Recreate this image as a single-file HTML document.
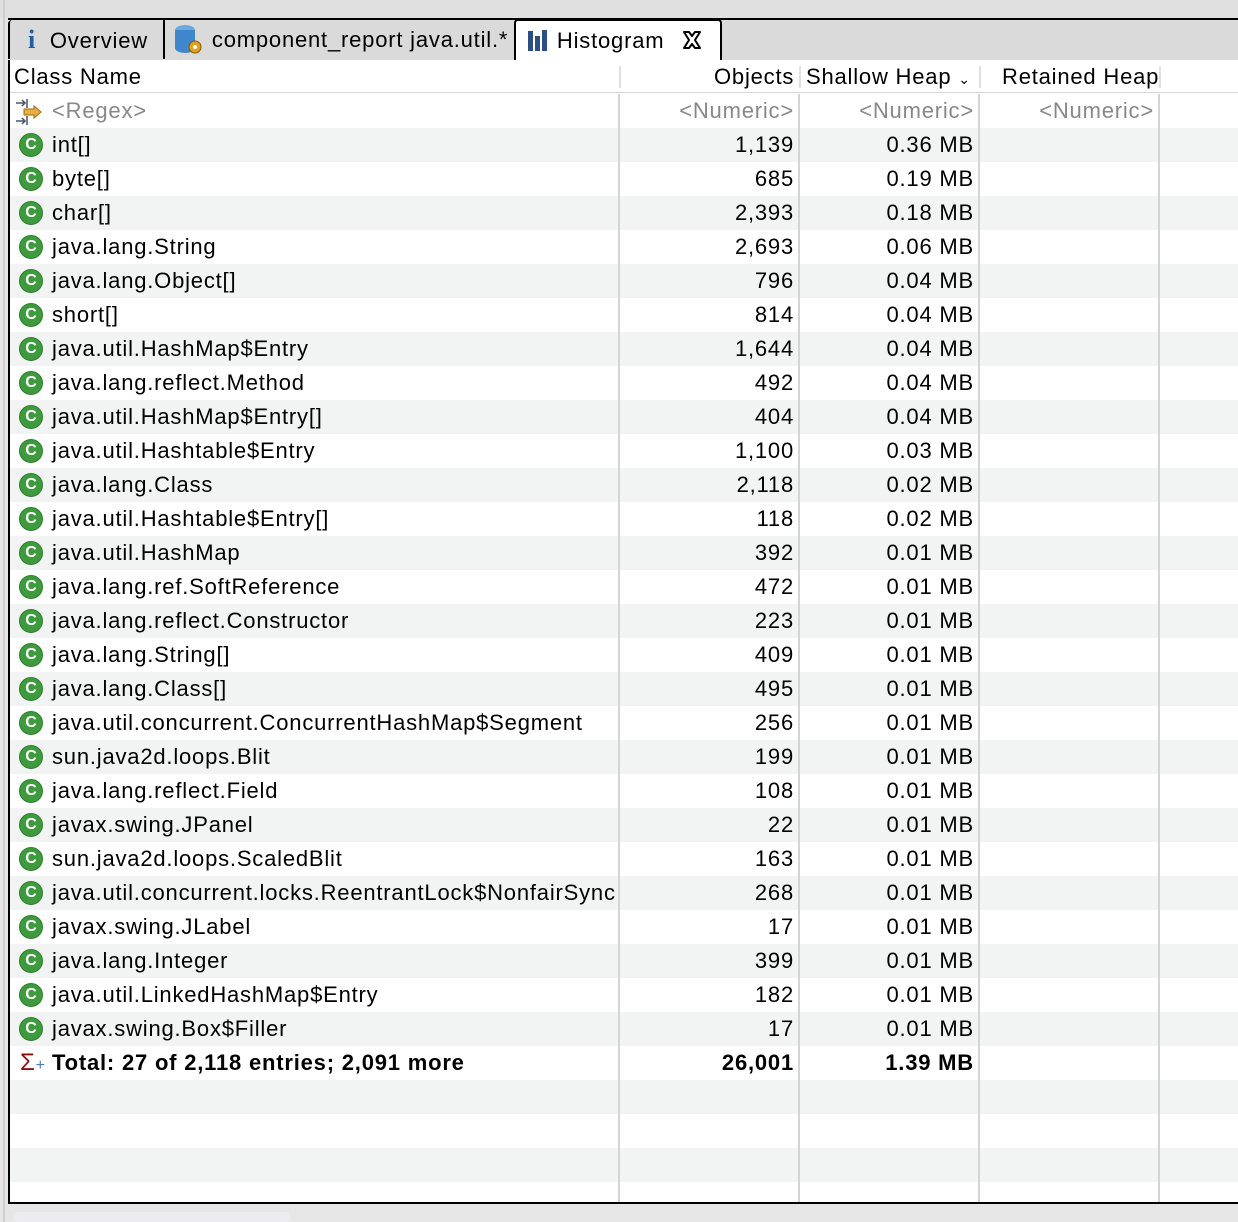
<!DOCTYPE html><html><head><style>
body{margin:0;width:1238px;height:1222px;background:#e6e6e6;position:relative;overflow:hidden;font-family:"Liberation Sans",sans-serif;font-size:22px;letter-spacing:0.8px;color:#000}
.abs{position:absolute}
.tab{position:absolute;top:20px;height:39px;background:#dadada;border-left:2px solid #000;box-sizing:border-box;line-height:40px;white-space:nowrap}
.row{position:absolute;left:10px;width:1228px;height:34px;line-height:34px}
.g{background:#f2f4f4}
.c{position:absolute;top:0;height:34px;white-space:nowrap}
.n{left:42px}
.o{right:444px;text-align:right}
.s{right:264px;text-align:right}
.vl{position:absolute;top:94px;width:2px;height:1108px;background:#d4d4d4}
.ic{position:absolute;left:9px;top:5px;width:24px;height:24px;border-radius:50%;background:#3d9a3d;border:1px solid #2f7f2f;box-sizing:border-box;color:#fff;font-size:16px;letter-spacing:0;font-weight:bold;line-height:22px;text-align:center}
</style></head><body>
<div class="abs" style="left:0;top:0;width:1238px;height:18px;background:#e0e0e0"></div>
<div class="abs" style="left:3px;top:0;width:2px;height:1222px;background:#cfcfcf"></div>
<div class="abs" style="left:8px;top:18px;width:1230px;height:2px;background:#000"></div>
<div class="abs" style="left:8px;top:20px;width:1230px;height:40px;background:#dadada"></div>
<div class="tab" style="left:8px;width:156px;padding-left:18px;border-radius:4px 0 0 0"><span style="color:#1f5fa8;font-family:'Liberation Serif',serif;font-weight:bold;font-size:26px">i</span>&nbsp; Overview</div>
<div class="tab" style="left:163px;width:352px;padding-left:6px"><svg width="34" height="34" style="vertical-align:middle;margin-top:-4px"><ellipse cx="14" cy="8" rx="10" ry="5" fill="#6aa8e0"/><rect x="4" y="8" width="20" height="18" fill="#3f86cc"/><ellipse cx="14" cy="26" rx="10" ry="5" fill="#3f86cc"/><circle cx="24" cy="25" r="6" fill="#e0a020" stroke="#8a5a00"/><circle cx="24" cy="25" r="2" fill="#fff"/></svg> component_report java.util.*</div>
<div class="abs" style="left:514px;top:19px;width:208px;height:42px;background:#fff;border:2px solid #000;border-bottom:none;box-sizing:border-box;border-radius:4px 4px 0 0;line-height:40px;padding-left:10px;white-space:nowrap"><svg width="24" height="24" style="vertical-align:middle;margin-top:-4px"><rect x="2" y="3" width="5" height="20" fill="#2a4f80"/><rect x="9" y="8" width="5" height="15" fill="#2a4f80"/><rect x="16" y="2" width="5" height="21" fill="#2a4f80"/></svg> Histogram <svg width="22" height="22" style="vertical-align:middle;margin-left:10px;margin-top:-4px"><path d="M3 3 L8 3 L11 7 L14 3 L19 3 L14 11 L19 19 L14 19 L11 15 L8 19 L3 19 L8 11 Z" fill="none" stroke="#000" stroke-width="2" stroke-linejoin="round"/></svg></div>
<div class="abs" style="left:8px;top:60px;width:1230px;height:1142px;background:#fff;border-left:2px solid #000;border-bottom:2px solid #000"></div>
<div class="abs" style="left:10px;top:92px;width:1228px;height:1px;background:#d8d8d8"></div>
<div class="abs" style="left:14px;top:60px;line-height:33px">Class Name</div>
<div class="abs" style="left:714px;top:60px;line-height:33px">Objects</div>
<div class="abs" style="left:806px;top:60px;line-height:33px">Shallow Heap <span style="font-size:14px">&#8964;</span></div>
<div class="abs" style="left:1002px;top:60px;line-height:33px">Retained Heap</div>
<div class="abs" style="left:619px;top:66px;width:2px;height:22px;background:#e0e0e0"></div>
<div class="abs" style="left:799px;top:66px;width:2px;height:22px;background:#e0e0e0"></div>
<div class="abs" style="left:979px;top:66px;width:2px;height:22px;background:#e0e0e0"></div>
<div class="abs" style="left:1159px;top:66px;width:2px;height:22px;background:#e0e0e0"></div>
<div id="rows"></div>
<div class="vl" style="left:618px"></div><div class="vl" style="left:798px"></div><div class="vl" style="left:978px"></div><div class="vl" style="left:1158px"></div>
<div class="abs" style="left:14px;top:1212px;width:276px;height:10px;background:#ececf0;border-radius:4px"></div>
<script>
var d=[["int[]","1,139","0.36"],["byte[]","685","0.19"],["char[]","2,393","0.18"],["java.lang.String","2,693","0.06"],["java.lang.Object[]","796","0.04"],["short[]","814","0.04"],["java.util.HashMap$Entry","1,644","0.04"],["java.lang.reflect.Method","492","0.04"],["java.util.HashMap$Entry[]","404","0.04"],["java.util.Hashtable$Entry","1,100","0.03"],["java.lang.Class","2,118","0.02"],["java.util.Hashtable$Entry[]","118","0.02"],["java.util.HashMap","392","0.01"],["java.lang.ref.SoftReference","472","0.01"],["java.lang.reflect.Constructor","223","0.01"],["java.lang.String[]","409","0.01"],["java.lang.Class[]","495","0.01"],["java.util.concurrent.ConcurrentHashMap$Segment","256","0.01"],["sun.java2d.loops.Blit","199","0.01"],["java.lang.reflect.Field","108","0.01"],["javax.swing.JPanel","22","0.01"],["sun.java2d.loops.ScaledBlit","163","0.01"],["java.util.concurrent.locks.ReentrantLock$NonfairSync","268","0.01"],["javax.swing.JLabel","17","0.01"],["java.lang.Integer","399","0.01"],["java.util.LinkedHashMap$Entry","182","0.01"],["javax.swing.Box$Filler","17","0.01"]];
var h='<div class="row" style="top:94px;color:#888"><svg class="c" style="left:4px;top:4px" width="30" height="28"><path d="M2 5 H10 M8 2 L11 5 L8 8 M13 1 V10 M2 23 H10 M8 20 L11 23 L8 26 M13 18 V27" stroke="#456" stroke-width="1.5" fill="none"/><path d="M10 11 H20 V8 L27 14 L20 20 V17 H10 Z" fill="#e8b040" stroke="#a06a10"/></svg><span class="c" style="left:42px">&lt;Regex&gt;</span><span class="c o">&lt;Numeric&gt;</span><span class="c s">&lt;Numeric&gt;</span><span class="c" style="right:84px">&lt;Numeric&gt;</span></div>';
d.forEach(function(r,i){h+='<div class="row'+(i%2==0?' g':'')+'" style="top:'+(128+34*i)+'px"><span class="ic">C</span><span class="c n">'+r[0]+'</span><span class="c o">'+r[1]+'</span><span class="c s">'+r[2]+' MB</span></div>';});
h+='<div class="row" style="top:1046px;font-weight:bold"><span class="c" style="left:10px;color:#8a1010;font-weight:normal;font-size:24px">Σ<span style="color:#4a7ab0;font-size:16px">+</span></span><span class="c n">Total: 27 of 2,118 entries; 2,091 more</span><span class="c o">26,001</span><span class="c s">1.39 MB</span></div>';
h+='<div class="row g" style="top:1080px"></div><div class="row g" style="top:1148px"></div>';
document.getElementById('rows').innerHTML=h;
</script>
</body></html>
